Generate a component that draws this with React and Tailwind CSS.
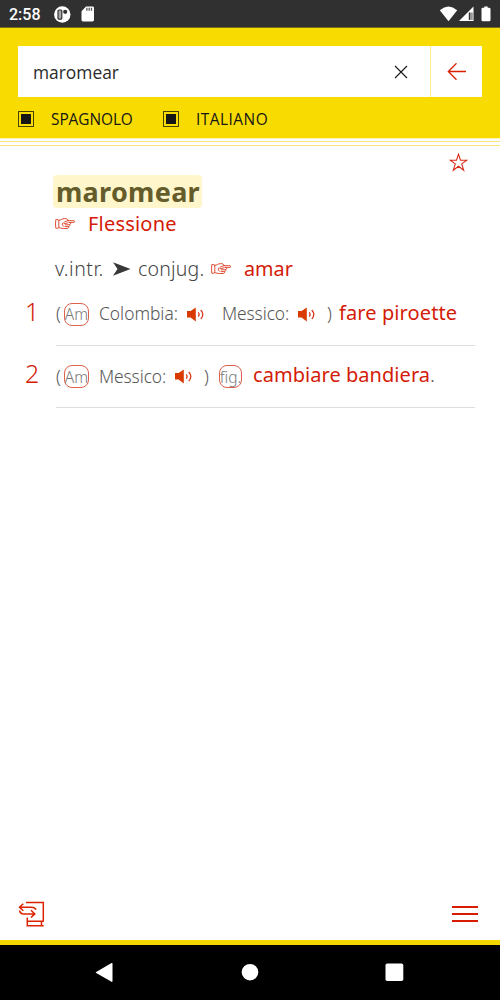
import React from "react";

function StatusBar() {
  return (
    <div className="flex h-[27px] shrink-0 items-center bg-[#303030] pl-[9px] pr-[9px] text-white">
      <span className="w-[45px] pt-[2px] font-['Roboto',sans-serif] text-[16px] font-medium leading-none">2:58</span>
      <svg className="mt-px h-[17px] w-[17px]" viewBox="0 0 17 17">
        <circle cx="8.3" cy="8.5" r="8.2" fill="#fff" />
        <rect x="4" y="4" width="3.8" height="9.2" rx="1" fill="#aaa" stroke="#303030" strokeWidth="1.2" />
        <circle cx="11.2" cy="5.8" r="2.1" fill="#303030" />
      </svg>
      <svg className="ml-[10px] mt-px h-[16px] w-[14px]" viewBox="0 0 14 16">
        <path d="M5 .5h6.6a1.4 1.4 0 0 1 1.4 1.4v12.2a1.4 1.4 0 0 1-1.4 1.4H1.9a1.4 1.4 0 0 1-1.4-1.4V5.3z" fill="#fff" />
        <path d="M5.9 1.8v3M8.2 1.8v3M10.5 1.8v3" stroke="#555" strokeWidth="1.3" />
      </svg>
      <div className="grow" />
      <svg className="h-[16px] w-[52px]" viewBox="0 0 52 16">
        <path d="M0.8 4.2Q9.5 -3 18.2 4.2L9.5 15.3z" fill="#fff" />
        <path d="M34.5 .5V15H20z" fill="#fff" />
        <path d="M29.8 6.5h3.6v7.4h-3.6z" fill="#303030" />
        <path d="M32 5v9.5" stroke="#fff" strokeWidth="1" />
        <path d="M43.7 1.8h1.6V.4h3.4v1.4h1.6a1.2 1.2 0 0 1 1.2 1.2v11a1.2 1.2 0 0 1-1.2 1.2h-6.6a1.2 1.2 0 0 1-1.2-1.2V3a1.2 1.2 0 0 1 1.2-1.2z" fill="#fff" />
      </svg>
    </div>
  );
}

function Check() {
  return (
    <span className="flex h-[16px] w-[16px] items-center justify-center border border-[#4a4200]">
      <span className="h-[10px] w-[10px] bg-[#161616]" />
    </span>
  );
}

function Header() {
  return (
    <header className="h-[111px] shrink-0 border-t border-[#76701a] bg-[#f8db00] px-[18px] pt-[18px] font-['Open_Sans',sans-serif] text-[#161616]">
      <div className="flex h-[51px]">
        <div className="flex w-[412px] items-center bg-white pl-[15px] pr-[22px]">
          <span className="grow pt-[2px] text-[17.4px] leading-none text-[#2a2a2a]">maromear</span>
          <svg className="h-[14px] w-[14px]" viewBox="0 0 14 14">
            <path d="M1 1l12 12M13 1L1 13" stroke="#161616" strokeWidth="1.1" />
          </svg>
        </div>
        <div className="w-px bg-[#ffec8a]" />
        <div className="flex grow items-center justify-center bg-white">
          <svg className="h-[18px] w-[20px]" viewBox="0 0 20 18">
            <path d="M19 8.5H1.5M9.5 .3L1.3 8.5l8.2 8.2" fill="none" stroke="#d92000" strokeWidth="1.3" />
          </svg>
        </div>
      </div>
      <div className="flex h-[44px] items-center leading-none">
        <Check />
        <span className="ml-[17px] w-[112px] pt-[2px] text-[15.4px] tracking-[-0.05px]">SPAGNOLO</span>
        <Check />
        <span className="ml-[17px] pt-[2px] text-[15.4px] tracking-[0.5px]">ITALIANO</span>
      </div>
    </header>
  );
}

function Hand({ className = "" }) {
  return (
    <svg className={`h-[12px] w-[20px] shrink-0 ${className}`} viewBox="0 0 20 12" fill="none" stroke="#dc3c20" strokeWidth="0.9" strokeLinecap="round" strokeLinejoin="round">
      <path d="M2.6 1.6H.8Q.2 6 .8 10.2h1.8M3.8 2v7.8M3.8 2.4C6 2.3 7 .6 9.8.6c2 0 3 .6 3.2 1.9M13 2.7h6c.9 0 .9 1.7 0 1.7h-5M14.8 4.5c1.4.5 1 2-.4 2.1.8.9.3 1.9-.9 1.9.4.9-.1 1.9-1.5 2H8.4C6.2 10.6 5.4 9.6 3.8 9.6M13 2.6L9.4 4c-1.2.5-.8 2 .6 1.7l2.8-.9M10.4 6.8h3.7M10 8.6h3.2M7.5 5.2c-.6 1.2-.2 2.6.8 3" />
    </svg>
  );
}

function Speaker({ className = "" }) {
  return (
    <svg className={`h-[15px] w-[18px] shrink-0 ${className}`} viewBox="0 0 18 15">
      <path d="M0 4h3.6L8.8.4v14L3.6 10.6H0z" fill="#d93a00" />
      <path d="M11.2 5.4q1.8 2.1 0 4.2M13.8 3q4 4.5 0 9" fill="none" stroke="#d93a20" strokeWidth="1.3" />
    </svg>
  );
}

function Tag({ children, className = "" }) {
  return (
    <span className={`flex h-[23px] shrink-0 items-center justify-center rounded-[8px] border border-[#e0604e] pt-[2px] text-[15.5px] leading-none text-[#777] ${className}`}>
      {children}
    </span>
  );
}

function Entry() {
  return (
    <main className="flex grow flex-col font-['Noto_Sans','Open_Sans',sans-serif] font-light text-[#555]">
      <div className="h-px shrink-0 bg-[#fff3ae]" />
      <div className="mt-[2px] h-[5px] shrink-0 border-y border-[#f8e385]" />
      <div className="flex h-[29px] shrink-0 justify-end pr-[32px] pt-[7px]">
        <svg className="h-[19px] w-[19px]" viewBox="0 0 19 19">
          <path d="M9.5 1.2l2 6h6.3l-5.1 3.7 2 6.3-5.2-3.9-5.2 3.9 2-6.3-5.1-3.7h6.3z" fill="none" stroke="#d62a16" strokeWidth="1.1" />
        </svg>
      </div>
      <h1 className="ml-[53px] flex h-[33px] w-[149px] shrink-0 items-center rounded-[4px] bg-[#fff6cc] pl-[3px] text-[27px] font-bold leading-none tracking-[0.3px] text-[#655c2b]">
        maromear
      </h1>
      <div className="flex h-[32px] shrink-0 items-center pl-[55px] text-[20px] font-normal leading-none text-[#d41b08]">
        <Hand />
        <span className="ml-[13px] tracking-[0.2px]">Flessione</span>
      </div>
      <div className="mt-[13px] flex h-[32px] shrink-0 items-center pl-[55px] text-[19.5px] leading-none text-[#444]">
        <span className="w-[58px] whitespace-nowrap tracking-[0.5px]">v.intr.</span>
        <svg className="h-[14px] w-[18px]" viewBox="0 0 18 14">
          <path d="M0 .3L17.5 7 0 13.7 4.5 7z" fill="#383838" />
        </svg>
        <span className="ml-[7px] w-[73px] whitespace-nowrap tracking-[0.2px]">conjug.</span>
        <Hand />
        <span className="ml-[13px] text-[19.8px] font-normal text-[#d41b08]">amar</span>
      </div>
      <div className="ml-[25px] mr-[25px] flex h-[61px] shrink-0">
        <span className="w-[31px] pt-[14px] text-[25px] leading-none text-[#d41b08]">1</span>
        <div className="flex grow items-center whitespace-nowrap border-b border-[#dedede] pb-[2px] text-[17.4px] leading-none">
          <span className="w-[8px]">(</span>
          <Tag className="w-[25px]">Am</Tag>
          <span className="ml-[10px] w-[88px]">Colombia:</span>
          <Speaker />
          <span className="ml-[17px] w-[76px] tracking-[-0.1px]">Messico:</span>
          <Speaker />
          <span className="ml-[11px] w-[12px]">)</span>
          <span className="pb-[2px] text-[20px] font-normal tracking-[0.1px] text-[#d41b08]">fare piroette</span>
        </div>
      </div>
      <div className="ml-[25px] mr-[25px] flex h-[62px] shrink-0">
        <span className="w-[31px] pt-[15px] text-[25px] leading-none text-[#d41b08]">2</span>
        <div className="flex grow items-center whitespace-nowrap border-b border-[#dedede] text-[17.4px] leading-none">
          <span className="w-[8px]">(</span>
          <Tag className="w-[25px]">Am</Tag>
          <span className="ml-[10px] w-[76px] tracking-[-0.1px]">Messico:</span>
          <Speaker />
          <span className="ml-[11px] w-[15px]">)</span>
          <Tag className="w-[23px]">fig.</Tag>
          <span className="ml-[11px] pb-[3px] text-[20px] font-normal tracking-[0.05px] text-[#d41b08]">cambiare bandiera</span>
          <span className="pb-[3px] text-[20px]">.</span>
        </div>
      </div>
      <div className="grow" />
      <div className="flex h-[52px] shrink-0 items-center justify-between pl-[18px] pr-[22px]">
        <svg className="h-[26px] w-[27px]" viewBox="0 0 27 26" fill="none" stroke="#dc2300" strokeWidth="1.5">
          <path d="M8 1.5h17.3v18.8M9.3 16.5v8.2h16.4M9.3 20.3H25.8M23.5 20.3v4.4M1.5 6.2h12c2 0 3.8.9 4.6 2.5M5.3 2.7L1.5 6.2l3.8 3.6M1.5 9.5c.5 2.4 2 3.4 4.2 3.4h11M13 9.3l3.8 3.6-3.8 3.6" />
        </svg>
        <div className="flex w-[26px] flex-col gap-[5px]">
          <span className="h-[2px] bg-[#d91b00]" />
          <span className="h-[2px] bg-[#d91b00]" />
          <span className="h-[2px] bg-[#d91b00]" />
        </div>
      </div>
    </main>
  );
}

function NavBar() {
  return (
    <nav className="flex h-[60px] shrink-0 items-center border-t-[5px] border-[#f3d800] bg-black pl-[95px]">
      <svg className="h-[20px] w-[310px]" viewBox="0 0 310 20" fill="#fff">
        <path d="M1.2 8.9L16.5 .1q1-.5 1 .6v17.4q0 1.2-1 .6L1.2 10.1q-1-.6 0-1.2z" />
        <circle cx="155" cy="9.2" r="8.3" />
        <rect x="290.5" y=".5" width="17.8" height="17.6" rx="1.8" />
      </svg>
    </nav>
  );
}

export default function App() {
  return (
    <div className="flex h-[1000px] w-[500px] flex-col overflow-hidden bg-white">
      <StatusBar />
      <Header />
      <Entry />
      <NavBar />
    </div>
  );
}
